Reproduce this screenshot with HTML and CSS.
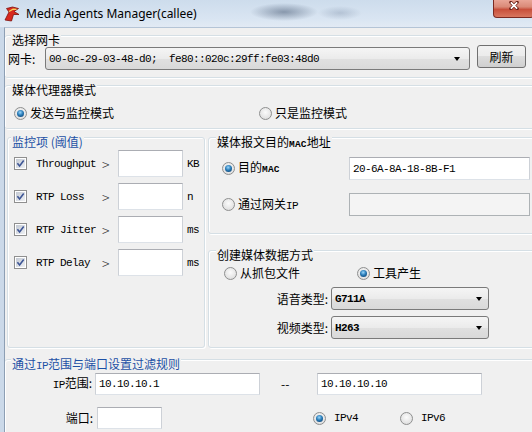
FILE: index.html
```html
<!DOCTYPE html>
<html lang="zh-CN">
<head>
	<meta charset="UTF-8">
	<title>Media Agents Manager(callee)</title>
	<link rel="stylesheet" href="styles.css">
</head>
<body>
<div class="window">
	<div class="titlebar">
		<svg class="app-icon" viewBox="0 0 18 18">
			<path d="M2 15 L6 7 L3.5 3.5 L9.5 2 L15.5 3.5 L11 6.5 L16 9.5 L10.5 9.5 L8.5 16 Z" fill="#d8281f" stroke="#7d100b" stroke-width=".8"/>
			<path d="M6 6.5 L10 4.2 L13.5 4.4" stroke="#f5d25c" stroke-width="1.2" fill="none"/>
		</svg>
		<span class="caption">Media Agents Manager(callee)</span>
		<div class="close-btn">
			<svg viewBox="0 0 12 10">
				<path d="M2.5 1.5 L9.5 8.5 M9.5 1.5 L2.5 8.5" stroke="#6a1d14" stroke-width="3.6" stroke-linecap="round"/>
				<path d="M2.5 1.5 L9.5 8.5 M9.5 1.5 L2.5 8.5" stroke="#fff" stroke-width="2"/>
			</svg>
		</div>
	</div>

	<div class="client">
		<!-- 网卡选择 -->
		<div class="group g-nic">
			<div class="group-title">选择网卡</div>
			<div class="nic-row">
				<span class="lbl">网卡:</span>
				<div class="combo nic-combo">
					<span class="val mono">00-0c-29-03-48-d0;  fe80::020c:29ff:fe03:48d0</span>
					<i class="arrow"></i>
				</div>
				<button class="btn">刷新</button>
			</div>
		</div>

		<!-- 代理模式 -->
		<div class="group g-mode">
			<div class="group-title">媒体代理器模式</div>
			<div class="mode-row">
				<label class="opt opt-send"><span class="radio on"></span>发送与监控模式</label>
				<label class="opt"><span class="radio"></span>只是监控模式</label>
			</div>
		</div>

		<div class="mid">
			<!-- 监控项 -->
			<div class="group g-mon">
				<div class="group-title blue">监控项 (阈值)</div>
				<div class="mon-list">
					<div class="mon-row">
						<span class="chk"><svg viewBox="0 0 9 9"><path d="M1.4 4.3 L3.6 6.9 L7.7 1.6"/></svg></span>
						<span class="mon-name mono">Throughput</span>
						<span class="gt">&gt;</span>
						<input class="input mon-val" type="text">
						<span class="unit mono">KB</span>
					</div>
					<div class="mon-row">
						<span class="chk"><svg viewBox="0 0 9 9"><path d="M1.4 4.3 L3.6 6.9 L7.7 1.6"/></svg></span>
						<span class="mon-name mono">RTP Loss</span>
						<span class="gt">&gt;</span>
						<input class="input mon-val" type="text">
						<span class="unit mono">n</span>
					</div>
					<div class="mon-row">
						<span class="chk"><svg viewBox="0 0 9 9"><path d="M1.4 4.3 L3.6 6.9 L7.7 1.6"/></svg></span>
						<span class="mon-name mono">RTP Jitter</span>
						<span class="gt">&gt;</span>
						<input class="input mon-val" type="text">
						<span class="unit mono">ms</span>
					</div>
					<div class="mon-row">
						<span class="chk"><svg viewBox="0 0 9 9"><path d="M1.4 4.3 L3.6 6.9 L7.7 1.6"/></svg></span>
						<span class="mon-name mono">RTP Delay</span>
						<span class="gt">&gt;</span>
						<input class="input mon-val" type="text">
						<span class="unit mono">ms</span>
					</div>
				</div>
			</div>

			<div class="mid-right">
				<!-- MAC 地址 -->
				<div class="group g-mac">
					<div class="group-title">媒体报文目的<span class="mac">MAC</span>地址</div>
					<div class="mac-row">
						<label class="opt"><span class="radio on"></span><span>目的<span class="mac">MAC</span></span></label>
						<input class="input" type="text" value="20-6A-8A-18-8B-F1">
					</div>
					<div class="mac-row">
						<label class="opt"><span class="radio"></span><span>通过网关<span class="ip">IP</span></span></label>
						<input class="input off" type="text">
					</div>
				</div>

				<!-- 数据来源 -->
				<div class="group g-gen">
					<div class="group-title">创建媒体数据方式</div>
					<div class="gen-row">
						<label class="opt"><span class="radio"></span>从抓包文件</label>
						<label class="opt"><span class="radio on"></span>工具产生</label>
					</div>
					<div class="codec-row">
						<span class="lbl">语音类型:</span>
						<div class="combo"><span class="val mono">G711A</span><i class="arrow"></i></div>
					</div>
					<div class="codec-row">
						<span class="lbl">视频类型:</span>
						<div class="combo"><span class="val mono">H263</span><i class="arrow"></i></div>
					</div>
				</div>
			</div>
		</div>

		<!-- 过滤规则 -->
		<div class="group g-filter">
			<div class="group-title blue">通过<span class="ip">IP</span>范围与端口设置过滤规则</div>
			<div class="ip-row">
				<span class="lbl"><span class="ip">IP</span>范围:</span>
				<input class="input ip-val" type="text" value="10.10.10.1">
				<span class="dash">--</span>
				<input class="input ip-val" type="text" value="10.10.10.10">
			</div>
			<div class="ip-row port-row">
				<span class="lbl">端口:</span>
				<input class="input port-val" type="text">
				<label class="opt opt-v4"><span class="radio on"></span><span class="mono">IPv4</span></label>
				<label class="opt opt-v6"><span class="radio"></span><span class="mono">IPv6</span></label>
			</div>
		</div>
	</div>
</div>
</body>
</html>
```

FILE: styles.css
```css
* {
	box-sizing: border-box;
}
body {
	margin: 0;
	font: 12px/16px "Noto Sans CJK SC", "Noto Sans", sans-serif;
	color: #000;
}
.window {
	width: 532px;
	height: 432px;
	overflow: hidden;
	display: flex;
	flex-direction: column;
	background: #cbd9e9;
}

/* title bar */
.titlebar {
	flex: none;
	height: 27px;
	display: flex;
	align-items: flex-start;
	background:
		radial-gradient(34px 9px at 284px 12px, rgba(60, 78, 105, .5), rgba(60, 78, 105, 0)),
		radial-gradient(22px 7px at 340px 13px, rgba(80, 100, 130, .25), rgba(80, 100, 130, 0)),
		linear-gradient(#cddcec, #d9e5f2 70%, #e2eaf4);
}
.app-icon {
	flex: none;
	width: 18px;
	height: 18px;
	margin: 5px 0 0 3px;
}
.caption {
	margin: 5px 0 0 5px;
	font-family: "Noto Sans", "Open Sans", sans-serif;
	font-size: 12px;
	line-height: 18px;
}
.close-btn {
	flex: none;
	margin-left: auto;
	margin-right: -2px;
	width: 41px;
	height: 18px;
	border: 1px solid #7b2a22;
	border-top: 0;
	border-radius: 0 0 4px 4px;
	background: linear-gradient(#e9a597, #da8a78 40%, #c8503c 56%, #d8765f);
	display: flex;
	justify-content: center;
	padding-top: 1px;
}
.close-btn svg {
	width: 12px;
	height: 9px;
}

/* dialog body */
.client {
	flex: 1;
	margin-left: 4px;
	border-left: 1px solid #8d9fb4;
	border-top: 1px solid #b4c4d6;
	background: #f0f0f0;
	display: flex;
	flex-direction: column;
}
.group {
	border: 1px solid #d5dfe5;
	border-radius: 3px;
	box-shadow: inset 1px 1px 0 #fff, 1px 1px 0 #fff;
}
.group-title {
	width: max-content;
	margin: -4px 0 0 6px;
	padding: 0 1px;
	background: #f0f0f0;
	line-height: 16px;
}
.blue {
	color: #1d50a5;
}
.mono {
	font-family: "Liberation Mono", monospace;
	font-size: 11px;
	letter-spacing: -.6px;
}
.mac {
	font-family: "Liberation Mono", monospace;
	font-size: 9.5px;
	font-weight: 700;
	letter-spacing: .2px;
}
.ip {
	font-family: "Liberation Mono", monospace;
	font-size: 11px;
	letter-spacing: -.6px;
}

/* controls */
.opt {
	display: flex;
	align-items: center;
	gap: 3px;
	white-space: nowrap;
}
.radio {
	flex: none;
	width: 13px;
	height: 13px;
	border-radius: 50%;
	border: 1px solid #8e8f8f;
	background: radial-gradient(circle at 50% 40%, #fbfbfb, #e2e2e2 70%, #d0d0d0);
	display: flex;
	align-items: center;
	justify-content: center;
}
.radio.on::after {
	content: '';
	width: 7px;
	height: 7px;
	border-radius: 50%;
	background: radial-gradient(circle at 45% 35%, #9ad6fb, #2a7db9 45%, #0c3f6f 90%);
}
.chk {
	flex: none;
	width: 13px;
	height: 13px;
	border: 1px solid #8f8f8f;
	background: #fff;
	padding: 1px;
}
.chk svg {
	display: block;
	width: 9px;
	height: 9px;
	background: linear-gradient(135deg, #c3c9d3, #eef0f3);
}
.chk path {
	fill: none;
	stroke: #3d5595;
	stroke-width: 1.6;
}
.input {
	height: 22px;
	margin: 0;
	padding: 0 3px;
	border: 1px solid;
	border-color: #abadb3 #cdd1d7 #dde2e8 #cdd1d7;
	background: #fff;
	font-family: "Liberation Mono", monospace;
	font-size: 11px;
	letter-spacing: -.6px;
	color: #000;
	outline: none;
}
.input.off {
	background: #f4f4f4;
	border-color: #adb2b5;
}
.combo {
	display: flex;
	align-items: center;
	height: 23px;
	border: 1px solid #7a7a7a;
	border-radius: 3px;
	background: linear-gradient(#f5f5f5, #ebebeb 50%, #e0e0e0 52%, #d9d9d9);
	padding-left: 3px;
}
.combo .val {
	flex: 1;
	white-space: pre;
}
.arrow {
	width: 0;
	height: 0;
	border-left: 3.5px solid transparent;
	border-right: 3.5px solid transparent;
	border-top: 4px solid #000;
	margin-right: 6px;
}
.btn {
	width: 49px;
	height: 23px;
	margin: 0 0 0 7px;
	padding: 0;
	border: 1px solid #707070;
	border-radius: 3px;
	background: linear-gradient(#f2f2f2, #ebebeb 50%, #dddddd 50%, #cfcfcf);
	font: inherit;
	color: #000;
}

/* 选择网卡 */
.g-nic {
	margin: 7px -8px 0 0;
	border-left: 0;
	padding-bottom: 7px;
}
.g-nic .group-title {
	margin-bottom: -3px;
}
.nic-row {
	display: flex;
	align-items: flex-start;
	padding-left: 3px;
}
.nic-row .lbl {
	width: 37px;
	margin-top: 2px;
	line-height: 23px;
}
.nic-combo {
	width: 425px;
	margin-top: 2px;
}
.nic-combo .arrow {
	margin-right: 9px;
}

/* 媒体代理器模式 */
.g-mode {
	margin: 7px -8px 0 0;
	border-left: 0;
	padding-bottom: 7px;
}
.mode-row {
	display: flex;
	height: 16px;
	margin-top: 7px;
	padding-left: 9px;
}
.opt-send {
	width: 245px;
}

/* middle */
.mid {
	display: flex;
	margin-top: 8px;
}
.g-mon {
	flex: none;
	width: 198px;
	height: 211px;
	margin-left: 2px;
}
.g-mon .group-title {
	margin-left: 3px;
}
.mon-list {
	display: flex;
	flex-direction: column;
	gap: 6px;
}
.mon-row {
	display: flex;
	align-items: center;
	height: 27px;
}
.mon-row .chk {
	margin-left: 6px;
}
.mon-name {
	width: 66px;
	margin-left: 9px;
	white-space: pre;
}
.gt {
	width: 16px;
	font-size: 14px;
	font-weight: 300;
	color: #333;
}
.mon-val {
	width: 65px;
	height: 27px;
}
.unit {
	margin-left: 4px;
}
.mid-right {
	flex: 1;
	display: flex;
	flex-direction: column;
	margin: 0 -8px 0 3px;
}
.g-mac {
	height: 97px;
}
.g-mac .group-title,
.g-gen .group-title {
	margin-left: 7px;
}
.mac-row {
	display: flex;
	align-items: center;
	height: 23px;
	margin-top: 4px;
	padding-left: 13px;
}
.mac-row + .mac-row {
	margin-top: 13px;
}
.mac-row .opt {
	width: 127px;
}
.mac-row .input {
	width: 181px;
	height: 23px;
}
.g-gen {
	height: 98px;
	margin-top: 16px;
}
.gen-row {
	display: flex;
	height: 16px;
	margin-top: 2px;
	padding-left: 15px;
}
.gen-row .opt:first-child {
	width: 133px;
}
.codec-row {
	display: flex;
	align-items: center;
	height: 23px;
	margin-top: 6px;
}
.codec-row .lbl {
	width: 119px;
	text-align: right;
}
.codec-row .combo {
	width: 158px;
	margin-left: 3px;
}
.codec-row .val {
	font-weight: 700;
}

/* 过滤规则 */
.g-filter {
	flex: 1;
	margin: 11px -8px -10px 0;
	border-left: 0;
}
.g-filter .group-title {
	margin-bottom: -1px;
}
.ip-row {
	display: flex;
	align-items: center;
	height: 22px;
}
.ip-row .lbl {
	width: 87px;
	text-align: right;
}
.ip-val {
	width: 165px;
	margin-left: 3px;
}
.dash {
	width: 33px;
	margin-left: 21px;
}
.port-row {
	margin-top: 12px;
}
.port-row .lbl {
	width: 88px;
}
.port-val {
	width: 65px;
	margin-left: 4px;
}
.port-row .opt {
	gap: 8px;
}
.opt-v4 {
	width: 87px;
	margin-left: 151px;
}
```
